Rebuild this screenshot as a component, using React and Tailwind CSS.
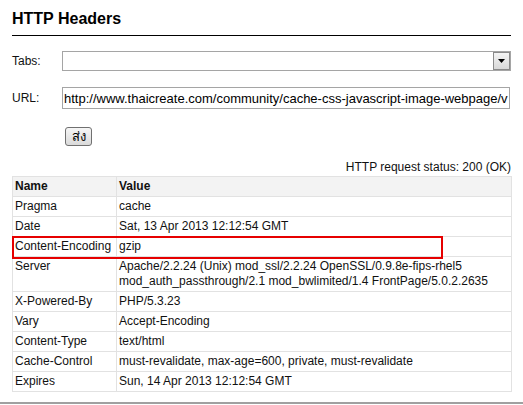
import React from "react";

const rows = [
  ["Pragma", "cache"],
  ["Date", "Sat, 13 Apr 2013 12:12:54 GMT"],
  ["Content-Encoding", "gzip"],
  [
    "Server",
    "Apache/2.2.24 (Unix) mod_ssl/2.2.24 OpenSSL/0.9.8e-fips-rhel5 mod_auth_passthrough/2.1 mod_bwlimited/1.4 FrontPage/5.0.2.2635",
  ],
  ["X-Powered-By", "PHP/5.3.23"],
  ["Vary", "Accept-Encoding"],
  ["Content-Type", "text/html"],
  ["Cache-Control", "must-revalidate, max-age=600, private, must-revalidate"],
  ["Expires", "Sun, 14 Apr 2013 12:12:54 GMT"],
];

export default function App() {
  return (
    <div
      className="w-[523px] h-[405px] overflow-hidden bg-white text-[#111] text-[12px] leading-[15px]"
      style={{ fontFamily: '"Liberation Sans", Arial, "Noto Sans", sans-serif' }}
    >
      <div className="px-[12px] pt-[10px]">
        <h1 className="text-[16px] leading-[18px] font-bold text-black">HTTP Headers</h1>
        <div className="mt-[7px] h-px bg-black" />

        {/* Tabs */}
        <div className="mt-[15px] flex items-center">
          <div className="w-[50px]">Tabs:</div>
          <div className="w-[449px] h-[20px] border border-[#a5a5a5] bg-white flex justify-end">
            <div className="w-[17px] h-full border border-[#8a8a8a] bg-gradient-to-b from-[#f4f4f4] to-[#d8d8d8] flex items-center justify-center">
              <svg width="7" height="4" viewBox="0 0 7 4">
                <path d="M0 0h7L3.5 4z" fill="#000" />
              </svg>
            </div>
          </div>
        </div>

        {/* URL */}
        <div className="mt-[16px] flex items-center">
          <div className="w-[50px]">URL:</div>
          <input
            readOnly
            value="http://www.thaicreate.com/community/cache-css-javascript-image-webpage/v"
            className="w-[448px] h-[22px] border border-[#a5a5a5] pl-[1px] text-[13px] text-black outline-none"
            style={{ fontFamily: '"Liberation Sans", Arial, sans-serif' }}
          />
        </div>

        <div className="mt-[18px] pl-[53px]">
          <button
            className="w-[27px] h-[19px] rounded-[3px] border border-[#707070] bg-gradient-to-b from-[#f6f6f6] to-[#dadada] text-[13px] leading-[15px] text-black flex items-center justify-center"
            style={{ fontFamily: '"Noto Sans", "DejaVu Sans", Tahoma, sans-serif' }}
          >
            ส่ง
          </button>
        </div>

        <div className="mt-[14px] text-right">HTTP request status: 200 (OK)</div>

        <div className="relative mt-[1px]">
          <table className="w-[500px] border-collapse border border-[#e2e2e2] table-fixed">
            <colgroup>
              <col className="w-[104px]" />
              <col />
            </colgroup>
            <thead>
              <tr className="bg-[#f3f3f3]">
                <th className="border border-[#e2e2e2] px-[2px] py-[2px] text-left font-bold">Name</th>
                <th className="border border-[#e2e2e2] px-[2px] py-[2px] text-left font-bold">Value</th>
              </tr>
            </thead>
            <tbody>
              {rows.map(([name, value]) => (
                <tr key={name}>
                  <td className="border border-[#e2e2e2] px-[2px] py-[2px] align-top whitespace-nowrap">{name}</td>
                  <td className="border border-[#e2e2e2] px-[2px] py-[2px] align-top">{value}</td>
                </tr>
              ))}
            </tbody>
          </table>
          {/* highlight */}
          <div className="absolute left-0 top-[60px] w-[431px] h-[23px] border-2 border-[#e60000]" />
        </div>
      </div>
      <div className="mt-[10px] h-[2px] bg-[#a0a0a0]" />
    </div>
  );
}
